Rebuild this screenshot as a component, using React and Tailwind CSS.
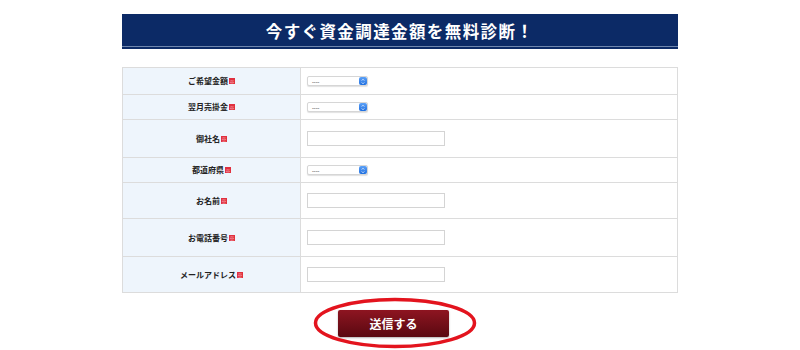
import React from "react";

const font = { fontFamily: '"Noto Sans CJK JP", "Noto Sans", sans-serif' };

function Req() {
  return (
    <span className="ml-[1px] inline-flex h-[6px] w-[6px] items-center justify-center overflow-hidden bg-[#e0303f] text-[5px] leading-none text-[#ffd5d9]">※</span>
  );
}

function FakeSelect() {
  return (
    <div className="flex h-[10px] w-[61px] items-stretch rounded-[2px] border border-[#d6d6d6] bg-white shadow-[0_1px_1px_rgba(0,0,0,0.12)]">
      <div className="flex flex-1 items-center pl-[4px] text-[5px] font-bold leading-none text-[#444]">----</div>
      <div className="flex w-[8px] flex-col items-center justify-center rounded-[2px] bg-gradient-to-b from-[#5da2f7] to-[#1e6fe0]">
        <svg width="4" height="7" viewBox="0 0 4 7">
          <path d="M0.7 2.6 L2 1.2 L3.3 2.6" fill="none" stroke="white" strokeWidth="0.7" />
          <path d="M0.7 4.4 L2 5.8 L3.3 4.4" fill="none" stroke="white" strokeWidth="0.7" />
        </svg>
      </div>
    </div>
  );
}

function FakeInput() {
  return <div className="h-[15px] w-[138px] border border-[#d4d4d4] bg-white" />;
}

const rows = [
  { label: "ご希望金額", type: "select", h: "h-[26px]" },
  { label: "翌月売掛金", type: "select", h: "h-[25px]" },
  { label: "御社名", type: "input", h: "h-[38px]" },
  { label: "都道府県", type: "select", h: "h-[25px]" },
  { label: "お名前", type: "input", h: "h-[36px]" },
  { label: "お電話番号", type: "input", h: "h-[38px]" },
  { label: "メールアドレス", type: "input", h: "h-[36px]" },
];

export default function App() {
  return (
    <div className="h-[350px] w-[800px] bg-white" style={font}>
      <div className="mx-auto w-[556px] pt-[14px]">
        <div className="flex flex-col">
          <div className="flex h-[32px] items-center justify-center bg-[#0c2a66] pt-[2px] text-[16.5px] font-bold tracking-[1.4px] text-white">
            今すぐ資金調達金額を無料診断！
          </div>
          <div className="h-[1px] bg-[#6f86ad]" />
          <div className="h-[2px] bg-[#0c2a66]" />
        </div>

        <div className="mt-[18px] border border-[#dcdcdc]">
          {rows.map((r, i) => (
            <div
              key={i}
              className={`flex ${r.h} ${i > 0 ? "border-t border-[#dcdcdc]" : ""}`}
            >
              <div className="flex w-[178px] items-center justify-center border-r border-[#dcdcdc] bg-[#eef5fc] text-[8px] font-bold text-[#222]">
                <span>{r.label}</span>
                <Req />
              </div>
              <div className="flex flex-1 items-center pl-[6px]">
                {r.type === "select" ? <FakeSelect /> : <FakeInput />}
              </div>
            </div>
          ))}
        </div>

        <div className="mt-[17px] flex justify-center pr-[13px]">
          <div className="relative">
            <button className="flex h-[27px] w-[111px] items-center justify-center rounded-[2px] bg-gradient-to-b from-[#8e1521] to-[#5a0911] text-[12px] font-bold text-white shadow-[0_1px_2px_rgba(0,0,0,0.3)]">
              送信する
            </button>
            <svg
              className="pointer-events-none absolute left-[-25px] top-[-13px]"
              width="164"
              height="52"
              viewBox="0 0 164 52"
            >
              <ellipse cx="82" cy="26" rx="79.5" ry="23.5" fill="none" stroke="#e3141e" strokeWidth="3.5" />
            </svg>
          </div>
        </div>
      </div>
    </div>
  );
}
